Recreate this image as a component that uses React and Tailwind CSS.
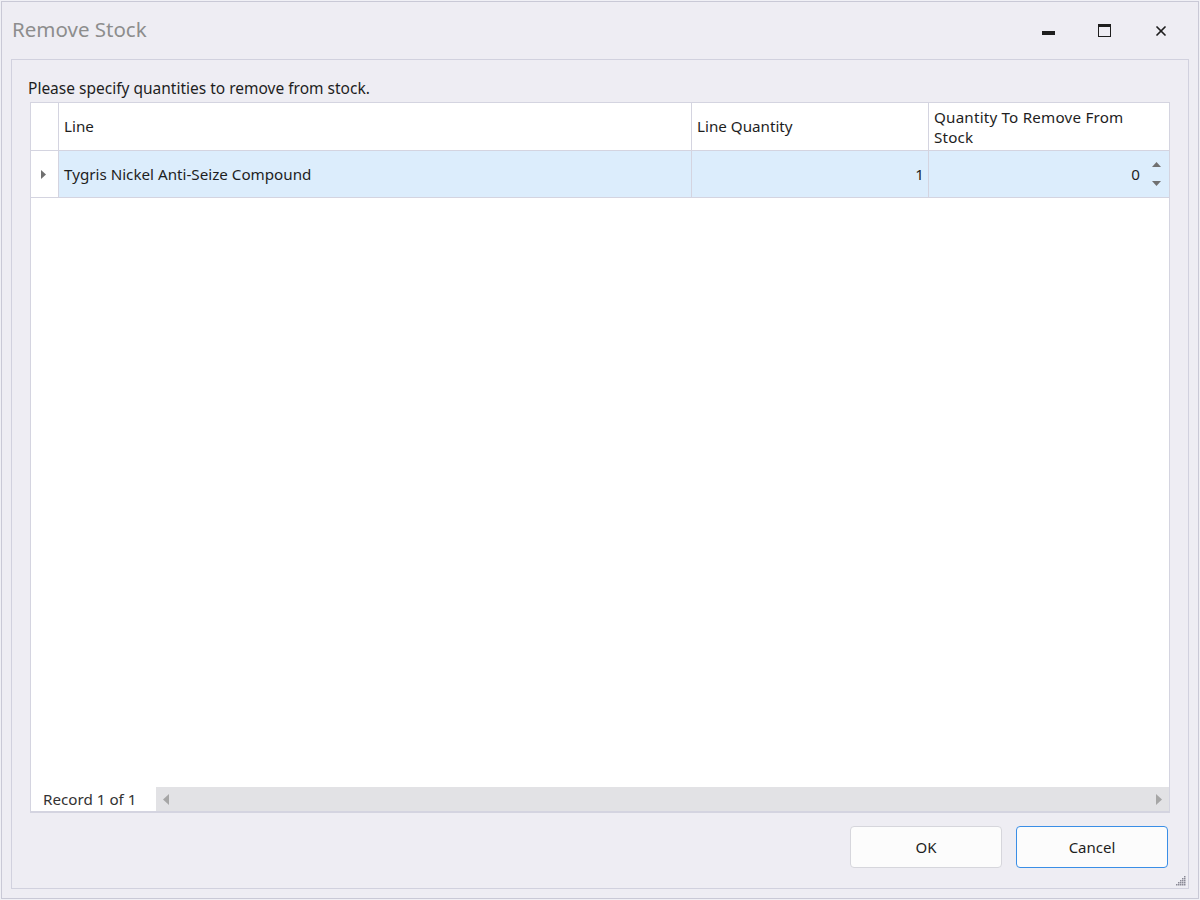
import { X } from 'lucide-react';

const font = { fontFamily: '"Segoe UI", "Noto Sans", "Open Sans", sans-serif' };

function Grip() {
    const dots = [[8, 0], [6, 2], [8, 2], [4, 4], [6, 4], [8, 4], [2, 6], [4, 6], [6, 6], [8, 6], [0, 8], [2, 8], [4, 8], [6, 8], [8, 8]];
    return (
        <svg width="10" height="10" viewBox="0 0 10 10" className="absolute right-[12px] bottom-[12px]">
            {dots.map(([x, y], i) => <rect key={i} x={x} y={y} width="1.5" height="1.5" fill="#8a8a96" />)}
        </svg>
    );
}

export default function App() {
    return (
        <div className="w-[1200px] h-[900px] bg-[#f0f0f5] p-[1px] text-[#1e1e1e]" style={font}>
            <div className="relative w-full h-full border border-[#c9c9d6] bg-[#eeedf3] flex flex-col">
                {/* Title bar */}
                <div className="h-[57px] flex items-center pl-[10px] shrink-0">
                    <div className="text-[20.5px] text-[#8d8d8d] mt-[-2px]">Remove Stock</div>
                    <div className="ml-auto flex items-center h-full mr-[6px]">
                        <div className="w-[56px] flex justify-center pt-[4px]">
                            <div className="w-[13px] h-[4px] bg-[#1e1e1e]" />
                        </div>
                        <div className="w-[56px] flex justify-center">
                            <div className="w-[13px] h-[13px] border-[1.5px] border-[#1e1e1e] border-t-[3px]" />
                        </div>
                        <div className="w-[58px] flex justify-center mr-[2px]">
                            <X size={16} strokeWidth={2.6} color="#1e1e1e" />
                        </div>
                    </div>
                </div>

                {/* Content panel */}
                <div className="flex-1 mx-[9px] mb-[9px] border-[1.5px] border-[#d1d1de] flex flex-col">
                    <div className="text-[15.5px] pl-[16px] pt-[18px] pb-[4px] leading-[20px]">Please specify quantities to remove from stock.</div>

                    {/* Grid */}
                    <div className="ml-[18px] mr-[18px] border border-[#d4d4e0] bg-white h-[711px] flex flex-col text-[15.2px]">
                        <div className="flex h-[48px] border-b border-[#d4d4e0] shrink-0">
                            <div className="w-[28px] border-r border-[#d4d4e0]" />
                            <div className="w-[633px] border-r border-[#d4d4e0] flex items-center pl-[5px]">Line</div>
                            <div className="w-[237px] border-r border-[#d4d4e0] flex items-center pl-[5px]">Line Quantity</div>
                            <div className="flex-1 pl-[5px] pt-[4px] leading-[20px] tracking-[0.2px]">Quantity To Remove From<br />Stock</div>
                        </div>
                        <div className="flex h-[47px] border-b border-[#d4d4e0] shrink-0">
                            <div className="w-[28px] border-r border-[#d4d4e0] flex items-center justify-center pr-[2px] pt-[1px]">
                                <svg width="5" height="9" viewBox="0 0 5 9"><path d="M0 0 L5 4.5 L0 9 Z" fill="#707070" /></svg>
                            </div>
                            <div className="w-[633px] border-r border-[#d4d4e0] bg-[#dcedfc] flex items-center pl-[5px]">Tygris Nickel Anti-Seize Compound</div>
                            <div className="w-[237px] border-r border-[#d4d4e0] bg-[#dcedfc] flex items-center justify-end pr-[4px]">1</div>
                            <div className="flex-1 bg-[#dcedfc] flex items-center justify-end pr-[8px]">
                                <span className="mr-[12px]">0</span>
                                <div className="flex flex-col gap-[14px]">
                                    <svg width="9" height="5" viewBox="0 0 9 5"><path d="M0 5 L4.5 0 L9 5 Z" fill="#707070" /></svg>
                                    <svg width="9" height="5" viewBox="0 0 9 5"><path d="M0 0 L4.5 5 L9 0 Z" fill="#707070" /></svg>
                                </div>
                            </div>
                        </div>
                        <div className="flex-1" />
                        <div className="flex h-[25px] shrink-0 border-b border-[#d4d4e0]">
                            <div className="w-[125px] flex items-center pl-[12px] text-[15.2px] text-[#333]">Record 1 of 1</div>
                            <div className="flex-1 bg-[#e2e2e5] flex items-center justify-between px-[7px]">
                                <svg width="6" height="11" viewBox="0 0 6 11"><path d="M6 0 L0 5.5 L6 11 Z" fill="#a6a6a6" /></svg>
                                <svg width="6" height="11" viewBox="0 0 6 11"><path d="M0 0 L6 5.5 L0 11 Z" fill="#a6a6a6" /></svg>
                            </div>
                        </div>
                    </div>

                    {/* Buttons */}
                    <div className="flex justify-end gap-[14px] mr-[20px] mt-[13px]">
                        <button className="w-[152px] h-[42px] bg-[#fcfcfc] border border-[#d6d6dc] rounded-[4px] text-[15px]">OK</button>
                        <button className="w-[152px] h-[42px] bg-[#fcfcfc] border-[1.5px] border-[#3a8ee6] rounded-[4px] text-[15px]">Cancel</button>
                    </div>
                </div>
                <Grip />
            </div>
        </div>
    );
}
